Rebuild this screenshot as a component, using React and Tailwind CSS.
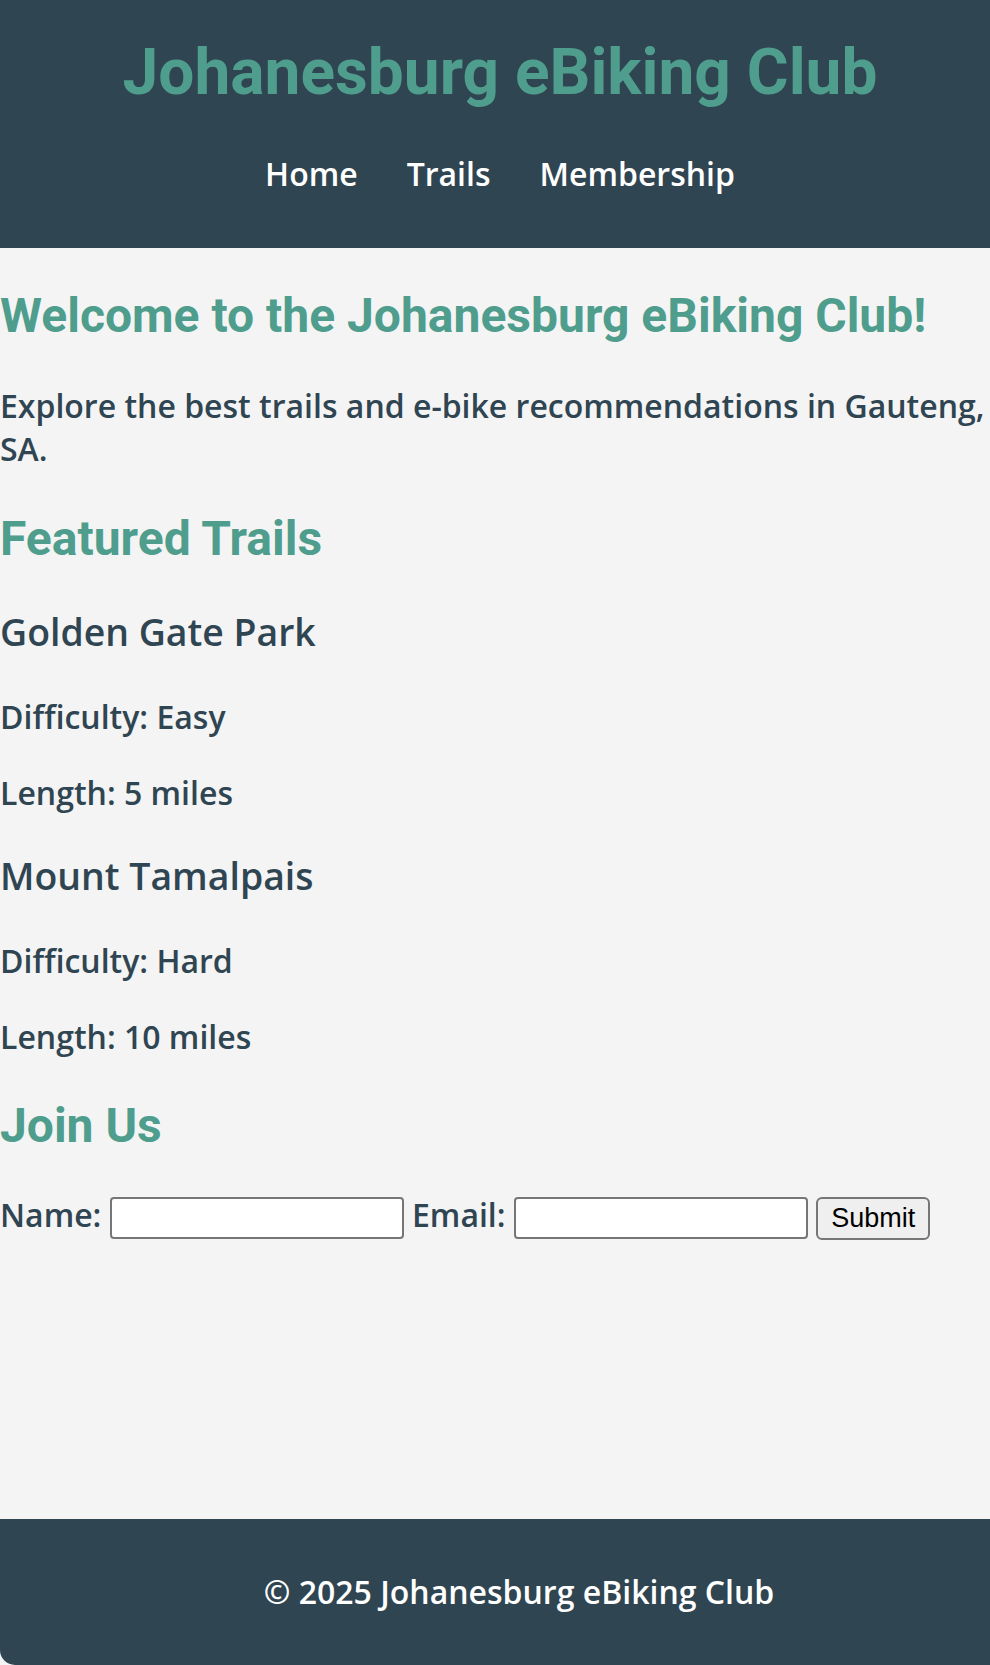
const trails = [
  { name: "Golden Gate Park", difficulty: "Easy", length: "5 miles" },
  { name: "Mount Tamalpais", difficulty: "Hard", length: "10 miles" },
]

const heading = "font-['Roboto',sans-serif] font-bold text-[#4f9d8d]"

export default function App() {
  return (
    <div className="bg-[#1b1731]">
      <div className="min-h-screen flex flex-col bg-[#f4f4f4] text-[#2f4552] font-['Open_Sans',sans-serif] font-semibold text-[32px] leading-[1.362]">
        {/* Header */}
        <header className="bg-[#2f4552] text-center pt-[35px] pb-[52px] pl-[10px]">
          <h1 className={`${heading} text-[64px] leading-[1.172] mb-[42px]`}>
            Johanesburg eBiking Club
          </h1>
          <nav className="flex justify-center gap-[49px] text-white">
            <a href="#">Home</a>
            <a href="#">Trails</a>
            <a href="#">Membership</a>
          </nav>
        </header>

        <main className="flex-1">
          <section>
            <h2 className={`${heading} text-[48px] leading-[1.172] mt-[40px] mb-[40px]`}>
              Welcome to the Johanesburg eBiking Club!
            </h2>
            <p>Explore the best trails and e-bike recommendations in Gauteng, SA.</p>
          </section>

          <section>
            <h2 className={`${heading} text-[48px] leading-[1.172] mt-[40px] mb-[40px]`}>
              Featured Trails
            </h2>
            {trails.map((trail) => (
              <div key={trail.name}>
                <h3 className="text-[37.4px] my-[37px]">{trail.name}</h3>
                <p className="mb-[32px]">Difficulty: {trail.difficulty}</p>
                <p className="mb-[32px]">Length: {trail.length}</p>
              </div>
            ))}
          </section>

          <section>
            <h2 className={`${heading} text-[48px] leading-[1.172] mt-[40px] mb-[38px]`}>
              Join Us
            </h2>
            <form onSubmit={(e) => e.preventDefault()}>
              <label>Name:</label>{" "}
              <input
                type="text"
                className="w-[294px] h-[42px] align-middle bg-white border-2 border-[#767676] rounded-[4px]"
              />{" "}
              <label>Email:</label>{" "}
              <input
                type="email"
                className="w-[294px] h-[42px] align-middle bg-white border-2 border-[#767676] rounded-[4px]"
              />{" "}
              <button
                type="submit"
                className="w-[114px] h-[43px] align-middle bg-[#efefef] border-2 border-[#767676] rounded-[6px] text-black font-['Liberation_Sans',Arial,sans-serif] font-normal text-[27px] leading-none"
              >
                Submit
              </button>
            </form>
          </section>
        </main>

        <footer className="bg-[#2f4552] text-white text-center py-[51px] pl-[48px] rounded-bl-[15px]">
          <p>© 2025 Johanesburg eBiking Club</p>
        </footer>
      </div>
    </div>
  )
}
